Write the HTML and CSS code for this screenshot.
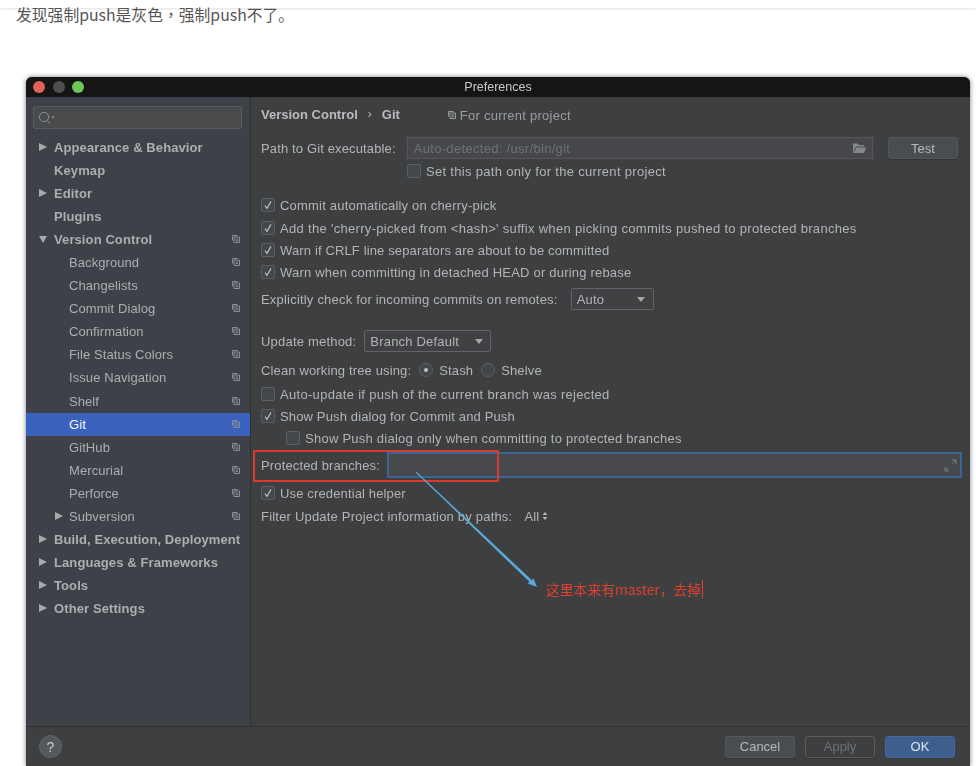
FILE: index.html
```html
<!DOCTYPE html>
<html lang="en">
<head>
<meta charset="utf-8">
<title>Preferences</title>
<link rel="stylesheet" href="styles.css">
</head>
<body>
<svg class="defs" width="0" height="0" aria-hidden="true">
  <symbol id="copy" viewBox="0 0 10 10"><path d="M1.5 6.5V1.5H6.5M3 8.5V3H8.5V8.5ZM4.5 5H7.2M4.5 6.7H7.2" fill="none" stroke="currentColor" stroke-width="1"/></symbol>
  <symbol id="tick" viewBox="0 0 14 14"><path d="M4 7.6L6 10.4L10 3.4" fill="none" stroke="#b9bbbd" stroke-width="1.2"/></symbol>
</svg>
<div class="topbar"></div>
<p class="intro" lang="zh-Hans">发现强制push是灰色<span class="comma" lang="zh-Hant">，</span>强制push不了。</p>
<section class="window">
  <header class="titlebar">
    <span class="light red"></span><span class="light grey"></span><span class="light green"></span>
    <span class="title">Preferences</span>
  </header>
  <div class="main">
    <nav class="sidebar">
      <div class="search">
        <svg class="search-icon" width="18" height="14" viewBox="0 0 18 14"><circle cx="6" cy="6" r="4.6" fill="none" stroke="#8f9193" stroke-width="1"/><path d="M9.3 9.5L12 12.6" stroke="#8f9193" stroke-width="1"/><path d="M13 5.5H17L15 7.5Z" fill="#8f9193"/></svg>
      </div>
      <ul class="tree">
        <li class="item top"><i class="arrow right"></i>Appearance &amp; Behavior</li>
        <li class="item top">Keymap</li>
        <li class="item top"><i class="arrow right"></i>Editor</li>
        <li class="item top">Plugins</li>
        <li class="item top"><i class="arrow down"></i>Version Control<svg class="pi"><use href="#copy"/></svg></li>
        <li class="item sub">Background<svg class="pi"><use href="#copy"/></svg></li>
        <li class="item sub">Changelists<svg class="pi"><use href="#copy"/></svg></li>
        <li class="item sub">Commit Dialog<svg class="pi"><use href="#copy"/></svg></li>
        <li class="item sub">Confirmation<svg class="pi"><use href="#copy"/></svg></li>
        <li class="item sub">File Status Colors<svg class="pi"><use href="#copy"/></svg></li>
        <li class="item sub">Issue Navigation<svg class="pi"><use href="#copy"/></svg></li>
        <li class="item sub">Shelf<svg class="pi"><use href="#copy"/></svg></li>
        <li class="item sub selected">Git<svg class="pi"><use href="#copy"/></svg></li>
        <li class="item sub">GitHub<svg class="pi"><use href="#copy"/></svg></li>
        <li class="item sub">Mercurial<svg class="pi"><use href="#copy"/></svg></li>
        <li class="item sub">Perforce<svg class="pi"><use href="#copy"/></svg></li>
        <li class="item sub"><i class="arrow right"></i>Subversion<svg class="pi"><use href="#copy"/></svg></li>
        <li class="item top"><i class="arrow right"></i>Build, Execution, Deployment</li>
        <li class="item top"><i class="arrow right"></i>Languages &amp; Frameworks</li>
        <li class="item top"><i class="arrow right"></i>Tools</li>
        <li class="item top"><i class="arrow right"></i>Other Settings</li>
      </ul>
    </nav>
    <div class="content">
      <div class="row crumbs">
        <b>Version Control</b><span class="sep">›</span><b>Git</b>
        <span class="scope"><svg class="scope-icon"><use href="#copy"/></svg>For current project</span>
      </div>
      <div class="row mt12">
        <span class="label tight">Path to Git executable:</span>
        <div class="field path"><span class="wide">Auto-detected: /usr/bin/git</span>
          <svg width="15" height="12" viewBox="0 0 15 12"><path d="M1 1.5H5.5L7 3H12V4.5H4L1 11ZM4.5 5.5H14.5L12 11H1.5Z" fill="#85888a"/></svg>
        </div>
        <button class="btn test">Test</button>
      </div>
      <div class="row mt1 set-path wide"><span class="cb"></span>Set this path only for the current project</div>
      <div class="row mt12"><span class="cb"><svg><use href="#tick"/></svg></span>Commit automatically on cherry-pick</div>
      <div class="row mt1 wide"><span class="cb"><svg><use href="#tick"/></svg></span>Add the 'cherry-picked from &lt;hash&gt;' suffix when picking commits pushed to protected branches</div>
      <div class="row tight"><span class="cb"><svg><use href="#tick"/></svg></span>Warn if CRLF line separators are about to be committed</div>
      <div class="row"><span class="cb"><svg><use href="#tick"/></svg></span>Warn when committing in detached HEAD or during rebase</div>
      <div class="row mt5">
        <span class="label">Explicitly check for incoming commits on remotes:</span>
        <div class="select auto">Auto<i class="caret"></i></div>
      </div>
      <div class="row mt20">
        <span class="label">Update method:</span>
        <div class="select branch">Branch Default<i class="caret"></i></div>
      </div>
      <div class="row mt7 tight">
        <span class="label">Clean working tree using:</span>
        <span class="radio on"></span><span class="opt">Stash</span>
        <span class="radio"></span><span>Shelve</span>
      </div>
      <div class="row mt2 wide"><span class="cb"></span>Auto-update if push of the current branch was rejected</div>
      <div class="row tight"><span class="cb"><svg><use href="#tick"/></svg></span>Show Push dialog for Commit and Push</div>
      <div class="row nested only"><span class="cb"></span>Show Push dialog only when committing to protected branches</div>
      <div class="row mt5 tight">
        <span class="label">Protected branches:</span>
        <div class="field focus">
          <svg width="13" height="13" viewBox="0 0 13 13"><path d="M8 1H12V5M12 1L8.5 4.5M5 12H1V8M1 12L4.5 8.5" fill="none" stroke="#7d8082" stroke-width="1"/></svg>
        </div>
      </div>
      <div class="row mt6 tight"><span class="cb"><svg><use href="#tick"/></svg></span>Use credential helper</div>
      <div class="row mt1">
        <span class="label">Filter Update Project information by paths:</span>
        <span class="all">All</span><svg width="6" height="10" viewBox="0 0 6 10"><path d="M3 1L5.5 4H.5ZM3 9L.5 6H5.5Z" fill="#b4b6b8"/></svg>
      </div>
    </div>
  </div>
  <footer class="footer">
    <span class="help">?</span>
    <button class="btn">Cancel</button>
    <button class="btn disabled">Apply</button>
    <button class="btn primary">OK</button>
  </footer>
</section>
<div class="mark-box"></div>
<svg class="mark-arrow" width="976" height="766" viewBox="0 0 976 766">
  <path d="M416.3 471.6L532 580.2L533.4 578.2L537 587L527.6 583.6L529.4 581.8L415.7 472.4Z" fill="#5aa9d8"/>
</svg>
<div class="mark-text" lang="zh-Hans">这里本来有master，去掉</div>
</body>
</html>
```
FILE: styles.css
```css
* { box-sizing: border-box; }
html, body { margin: 0; height: 766px; overflow: hidden; background: #fff; }
body { position: relative; font-family: "Liberation Sans", "Noto Sans CJK SC", sans-serif; }
.defs { position: absolute; }
.topbar { height: 8px; background: #fff; box-shadow: 0 1px 3px rgba(0,0,0,.12); }
.intro {
  margin: 0; padding: 0 0 0 16px; height: 14px; line-height: 14px;
  font-size: 15.8px; color: #555; font-family: "Noto Sans CJK SC", sans-serif;
}
.comma { font-family: "Noto Sans CJK TC", sans-serif; }
.window {
  margin: 55px 0 0 26px; width: 944px; height: 689px;
  display: flex; flex-direction: column;
  background: #3d3f41; border-radius: 6px 6px 0 0;
  box-shadow: 0 0 5px rgba(0,0,0,.5);
  font-size: 13px; color: #b2b4b6;
  filter: blur(.35px);
}
.titlebar {
  height: 20px; flex: none; display: flex; align-items: center; gap: 7.5px;
  padding-left: 7px; background: #151515; border-radius: 6px 6px 0 0; position: relative;
}
.light { width: 12px; height: 12px; border-radius: 50%; }
.red { background: #e0605a; }
.grey { background: #4f4f4f; }
.green { background: #6fc658; }
.title { position: absolute; left: 0; right: 0; text-align: center; color: #c9c9c9; font-size: 12.5px; }
.main { flex: 1; display: flex; min-height: 0; }
.sidebar { width: 225px; flex: none; background: #3f4148; border-right: 1px solid #2f3032; padding: 9px 0 0; }
.search {
  margin: 0 8px 0 7px; height: 23px; background: #484a4c; border: 1px solid #585a5c; border-radius: 2px;
  display: flex; align-items: center; padding-left: 4px;
}
.tree { list-style: none; margin: 7px 0 0; padding: 0; }
.item { height: 23.06px; line-height: 23px; position: relative; white-space: nowrap; color: #acaeb0; }
.top { padding-left: 28px; font-weight: bold; letter-spacing: .1px; }
.sub { padding-left: 43px; letter-spacing: .08px; }
.selected { background: #3a62bd; color: #f2f4f8; }
.arrow { position: absolute; }
.top .arrow { left: 13px; }
.sub .arrow { left: 29px; }
.arrow.right { top: 7px; border-left: 8px solid #a8aaac; border-top: 4.5px solid transparent; border-bottom: 4.5px solid transparent; }
.arrow.down { top: 8px; border-top: 7px solid #a8aaac; border-left: 4px solid transparent; border-right: 4px solid transparent; }
.pi { position: absolute; right: 9px; top: 6px; width: 10px; height: 10px; color: #8d8f92; }
.content { flex: 1; min-width: 0; padding: 6px 12px 0 10px; letter-spacing: .2px; }
.row { height: 22px; display: flex; align-items: center; white-space: nowrap; }
.wide { letter-spacing: .31px; }
.tight { letter-spacing: .14px; }
.only { letter-spacing: .25px; }
.mt1 { margin-top: 1px; } .mt2 { margin-top: 2px; } .mt5 { margin-top: 5px; } .mt6 { margin-top: 6px; }
.mt7 { margin-top: 7px; } .mt12 { margin-top: 12px; } .mt20 { margin-top: 20px; }
.crumbs { letter-spacing: 0; }
.crumbs b { color: #b9bbbd; }
.sep { margin: 0 10px; font-size: 12px; }
.scope { margin-left: 47px; color: #9a9c9e; display: flex; align-items: center; gap: 3px; position: relative; top: 1px; letter-spacing: .25px; }
.scope-icon { width: 10px; height: 10px; color: #9a9c9e; }
.label { margin-right: 6px; }
.field {
  height: 22px; flex: 1; display: flex; align-items: center; justify-content: space-between;
  background: #45474a; border: 1px solid #55575a; padding: 0 5px 0 6px;
}
.path { color: #6f7275; margin-left: 5px; }
.test { margin-left: 15px; width: 70px; flex: none; }
.btn {
  height: 22px; font: inherit; color: #b6b8ba; background: #4a4d4f; border: 1px solid #55585a;
  border-radius: 3px; padding: 0; box-shadow: 0 1px 0 rgba(0,0,0,.18); letter-spacing: 0;
}
.cb {
  width: 14px; height: 14px; flex: none; margin-right: 5px; background: #43474a;
  border: 1px solid #5d6063; border-radius: 2px; position: relative;
}
.cb svg { position: absolute; left: -1px; top: -1px; width: 14px; height: 14px; }
.set-path { padding-left: 146px; }
.nested { padding-left: 25px; }
.select {
  height: 22px; border: 1px solid #626467; border-radius: 2px; padding-left: 5px;
  display: flex; align-items: center; justify-content: space-between; padding-right: 6px; background: #3f4143;
}
.auto { width: 83px; margin-left: 7px; padding-right: 8px; }
.branch { width: 127px; margin-left: 2px; padding-right: 7px; }
.caret { border-top: 5px solid #a5a7a9; border-left: 4px solid transparent; border-right: 4px solid transparent; }
.radio {
  width: 14px; height: 14px; border-radius: 50%; flex: none; background: #43474a; border: 1px solid #5d6063;
  margin: 0 6px 0 2px; position: relative;
}
.radio.on::after { content: ""; position: absolute; left: 4px; top: 4px; width: 4px; height: 4px; border-radius: 50%; background: #c0c2c4; }
.opt { margin-right: 6px; }
.focus { background: #47494c; border: 2px solid #3c6596; margin: -1px -4px -1px 1px; padding-right: 3px; justify-content: flex-end; height: 26px; }
.all { margin: 0 3px 0 6px; }
.footer { height: 40px; flex: none; display: flex; align-items: center; gap: 10px; padding: 0 15px 0 13px; border-top: 1px solid #2f3032; }
.footer .btn { width: 70px; }
.help {
  width: 23px; height: 23px; border-radius: 50%; margin-right: auto; display: flex; align-items: center; justify-content: center;
  background: #56595b; border: 1px solid #616366; color: #c5c7c9; font-size: 14px;
}
.disabled { background: #3d3f41; border-color: #5a5c5e; color: #6f7274; }
.primary { background: #3e5f8e; border-color: #47699a; color: #dfe4ea; }
.mark-box { position: absolute; left: 253px; top: 450px; width: 246px; height: 32px; border: 2px solid #d93a2c; }
.mark-arrow { position: absolute; left: 0; top: 0; }
.mark-text {
  position: absolute; left: 546px; top: 580px; height: 18px; line-height: 18px; padding-right: 1px;
  font-size: 13.8px; color: #e2402f; border-right: 1px solid #e2402f; font-family: "Noto Sans CJK SC", sans-serif;
}
```
